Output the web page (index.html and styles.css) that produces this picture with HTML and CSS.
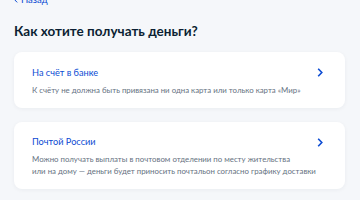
FILE: index.html
```html
<!DOCTYPE html>
<html lang="ru">
<head>
<meta charset="utf-8">
<link rel="stylesheet" href="styles.css">
</head>
<body>
<main class="page">
  <a class="back" href="#">
    <svg class="back-icon" width="4" height="6" viewBox="0 0 4 6"><path d="M3.2 0.6 L0.9 3 L3.2 5.4" fill="none" stroke="#0d4cd3" stroke-width="1"/></svg>
    <span>Назад</span>
  </a>
  <h1 class="title">Как хотите получать деньги?</h1>
  <div class="cards">
    <a class="card" href="#">
      <div class="card-body">
        <div class="card-title">На счёт в банке</div>
        <div class="card-text">К счёту не должна быть привязана ни одна карта или только карта «Мир»</div>
      </div>
      <svg class="chevron" width="6" height="9" viewBox="0 0 6 9"><path d="M1.2 0.8 L4.8 4.5 L1.2 8.2" fill="none" stroke="#0d4cd3" stroke-width="1.6"/></svg>
    </a>
    <a class="card" href="#">
      <div class="card-body">
        <div class="card-title">Почтой России</div>
        <div class="card-text">Можно получать выплаты в почтовом отделении по месту жительства<br>или на дому — деньги будет приносить почтальон согласно графику доставки</div>
      </div>
      <svg class="chevron" width="6" height="9" viewBox="0 0 6 9"><path d="M1.2 0.8 L4.8 4.5 L1.2 8.2" fill="none" stroke="#0d4cd3" stroke-width="1.6"/></svg>
    </a>
  </div>
</main>
</body>
</html>
```
FILE: styles.css
```css
* { box-sizing: border-box; }
html, body { margin: 0; padding: 0; }
body {
  background: #f5f7fa;
  font-family: Lato, "Noto Sans", sans-serif;
  color: #0b1f33;
  width: 360px;
  height: 200px;
  overflow: hidden;
}
.page {
  padding: 0 15px 0 14px;
}
.back {
  display: flex;
  align-items: center;
  gap: 3px;
  margin-top: -6px;
  height: 12px;
  font-size: 9.5px;
  line-height: 12px;
  color: #0d4cd3;
  text-decoration: none;
}
.back-icon { display: block; }
.title {
  margin: 15.5px 0 0;
  font-size: 13.5px;
  line-height: 18px;
  font-weight: 700;
  letter-spacing: 0;
}
.cards {
  display: flex;
  flex-direction: column;
  gap: 14px;
  margin-top: 12.5px;
}
.card {
  display: flex;
  align-items: flex-start;
  justify-content: space-between;
  background: #fff;
  border-radius: 8px;
  box-shadow: 0 1px 4px rgba(11, 31, 51, 0.05);
  text-decoration: none;
  padding: 14.5px 22px 12px 18px;
}
.card-body {
  flex: 1;
  min-width: 0;
}
.card-title {
  font-size: 9.2px;
  line-height: 12px;
  color: #0d4cd3;
}
.card-text {
  margin-top: 5px;
  font-size: 7.85px;
  line-height: 12px;
  color: #66727f;
  white-space: nowrap;
}
.chevron {
  display: block;
  margin-top: 1.5px;
  flex: none;
}
```
